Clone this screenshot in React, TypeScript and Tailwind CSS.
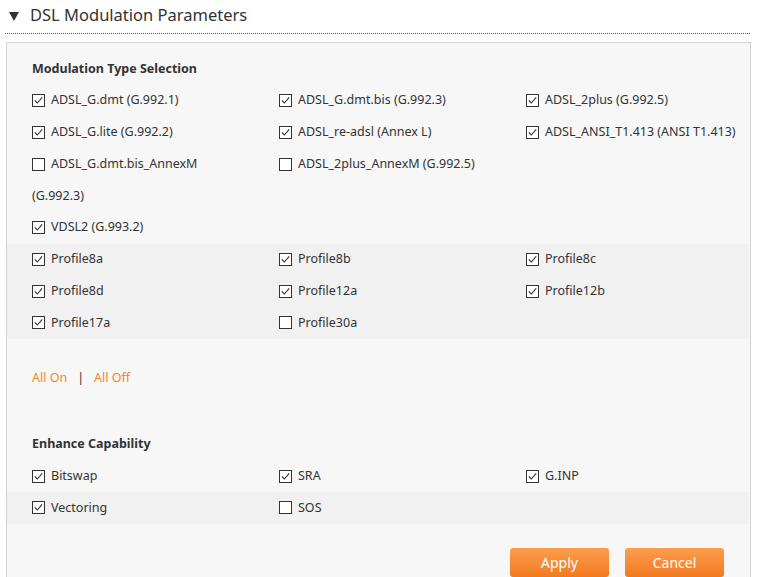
import React from 'react';

type Item = { label: string; checked: boolean };

const FONT = "font-['Noto_Sans','Open_Sans',sans-serif]";

const CheckIcon: React.FC<{ checked: boolean }> = ({ checked }) => (
  <svg width="13" height="13" viewBox="0 0 13 13" className="shrink-0">
    <rect x="0.5" y="0.5" width="12" height="12" fill="#ffffff" stroke="#333333" />
    {checked && <path d="M2.8 6.4 L5.3 9 L10.2 3.4" fill="none" stroke="#333333" strokeWidth="1.1" />}
  </svg>
);

const Check: React.FC<Item> = ({ label, checked }) => (
  <div className="flex items-center h-[31.75px] gap-[6px]">
    <CheckIcon checked={checked} />
    <span className="whitespace-nowrap">{label}</span>
  </div>
);

const Row: React.FC<{ items: Item[] }> = ({ items }) => (
  <div className="grid grid-cols-[247px_247px_1fr] px-[25px]">
    {items.map((it, i) => (
      <Check key={i} {...it} />
    ))}
  </div>
);

const profiles: Item[][] = [
  [
    { label: 'Profile8a', checked: true },
    { label: 'Profile8b', checked: true },
    { label: 'Profile8c', checked: true },
  ],
  [
    { label: 'Profile8d', checked: true },
    { label: 'Profile12a', checked: true },
    { label: 'Profile12b', checked: true },
  ],
  [
    { label: 'Profile17a', checked: true },
    { label: 'Profile30a', checked: false },
  ],
];

const App: React.FC = () => {
  return (
    <div className={`w-[764px] h-[577px] overflow-hidden bg-white text-[12.5px] text-[#333333] ${FONT}`}>
      <header className="mx-[5px] w-[745px] h-[34px] flex items-center gap-[11px] pl-[4px] border-b border-dotted border-[#555555]">
        <svg width="10" height="9" viewBox="0 0 10 9">
          <path d="M0 0 H10 L5 9 Z" fill="#333333" />
        </svg>
        <h2 className="text-[16.5px] text-[#333333] leading-none pb-[2px]">DSL Modulation Parameters</h2>
      </header>

      <section className="mt-[8px] ml-[6px] w-[745px] h-[560px] border border-[#d4d4d4] bg-[#f7f7f7] pt-[10px]">
        <h3 className="px-[25px] h-[31.75px] flex items-center font-bold">Modulation Type Selection</h3>
        <Row
          items={[
            { label: 'ADSL_G.dmt (G.992.1)', checked: true },
            { label: 'ADSL_G.dmt.bis (G.992.3)', checked: true },
            { label: 'ADSL_2plus (G.992.5)', checked: true },
          ]}
        />
        <Row
          items={[
            { label: 'ADSL_G.lite (G.992.2)', checked: true },
            { label: 'ADSL_re-adsl (Annex L)', checked: true },
            { label: 'ADSL_ANSI_T1.413 (ANSI T1.413)', checked: true },
          ]}
        />
        <div className="grid grid-cols-[247px_247px_1fr] px-[25px]">
          <div>
            <Check label="ADSL_G.dmt.bis_AnnexM" checked={false} />
            <div className="h-[31.75px] flex items-center">(G.992.3)</div>
          </div>
          <div>
            <Check label="ADSL_2plus_AnnexM (G.992.5)" checked={false} />
          </div>
        </div>
        <Row items={[{ label: 'VDSL2 (G.993.2)', checked: true }]} />

        <div className="bg-[#f1f1f1] mr-[1px]">
          {profiles.map((r, i) => (
            <Row key={i} items={r} />
          ))}
        </div>

        <div className="mt-[24px] px-[25px] h-[31.75px] flex items-center text-[#f3862f]">
          <a href="#">All On</a>
          <span className="mx-[10px] text-[#333333]">|</span>
          <a href="#">All Off</a>
        </div>

        <h3 className="mt-[34px] px-[25px] h-[31.75px] flex items-center font-bold">Enhance Capability</h3>
        <Row
          items={[
            { label: 'Bitswap', checked: true },
            { label: 'SRA', checked: true },
            { label: 'G.INP', checked: true },
          ]}
        />
        <div className="bg-[#f1f1f1] mr-[1px]">
          <Row
            items={[
              { label: 'Vectoring', checked: true },
              { label: 'SOS', checked: false },
            ]}
          />
        </div>

        <div className="mt-[24px] pr-[26px] flex justify-end gap-[16px]">
          <button className="w-[99px] h-[29px] rounded-[3px] bg-gradient-to-b from-[#fd9d4e] to-[#f27a1c] text-white text-[14px]">
            Apply
          </button>
          <button className="w-[99px] h-[29px] rounded-[3px] bg-gradient-to-b from-[#fd9d4e] to-[#f27a1c] text-white text-[14px]">
            Cancel
          </button>
        </div>
      </section>
    </div>
  );
};

export default App;
